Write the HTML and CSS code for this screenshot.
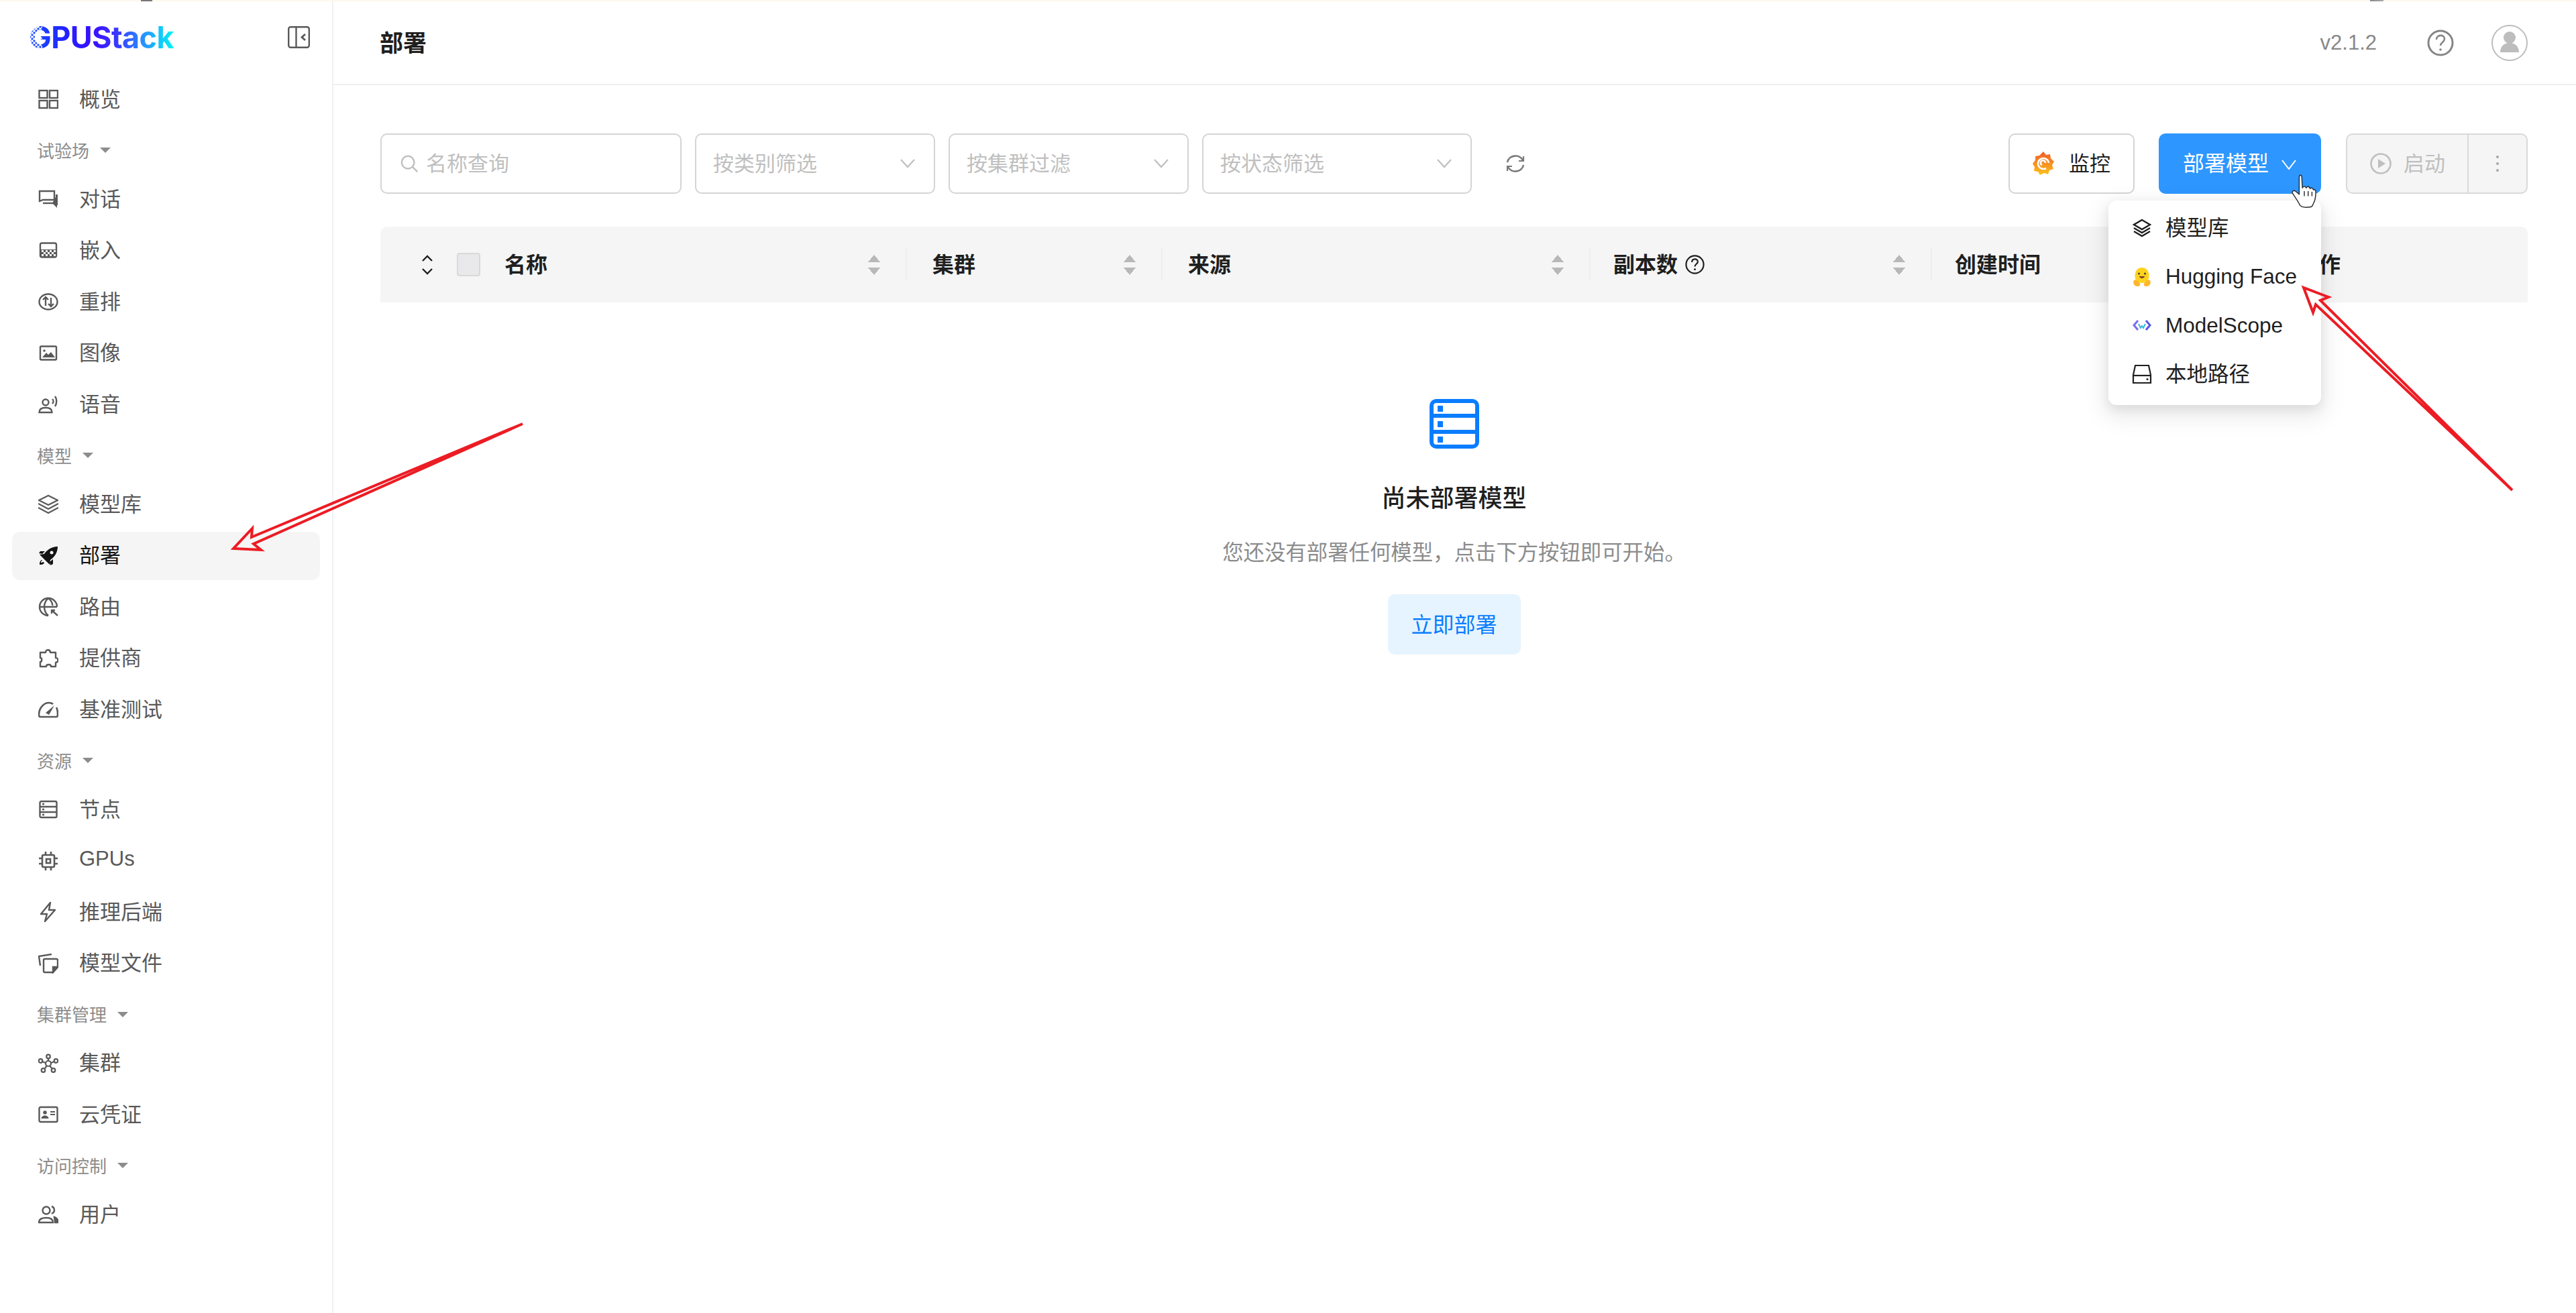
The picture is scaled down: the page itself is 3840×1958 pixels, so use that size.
FILE: index.html
```html
<!DOCTYPE html>
<html lang="zh-CN">
<head>
    <meta charset="UTF-8">
    <meta name="viewport" content="width=device-width, initial-scale=1.0">
    <title>GPUStack - 部署</title>
    <link rel="stylesheet" href="styles.css">
</head>
<body>
    <div class="top-strip"></div>
    <div class="shell">
        <aside class="sidebar">
            <div class="brand">
                <div class="logo">
                    <span class="logo-text">GPUStack</span>
                    <svg class="logo-dots" viewBox="0 0 20 40" fill="none" stroke="#fff" stroke-width="1.300">
                        <path d="M-6 6L10-10M-6 12L16-10M-6 18L22-4M-6 24L22-4M-6 30L20 4M-6 36L17 13M-6 42L13 23M0 42L14 28M6 42L20 28M12 42L22 32"/>
                        <path d="M-6 8L30 44M-6 2L30 38M-6-4L30 32M0-4L16 12M6-4L19 9M-6 14L24 44M-6 20L18 44M-6 26L12 44"/>
                    </svg>
                </div>
                <svg class="collapse-icon" viewBox="0 0 33 33" fill="none" stroke="#595959" stroke-width="2.400">
                    <rect x="1.2" y="1.2" width="30.6" height="30.6" rx="3"/>
                    <path d="M12.5 1v31"/>
                    <path d="M26 12l-5 4.500 5 4.500" stroke-width="2.800"/>
                </svg>
            </div>
            <nav class="menu">
                <a class="menu-item">
                    <svg class="icon" viewBox="0 0 30 30" fill="none" stroke="currentColor" stroke-width="2.400"><rect x="1.500" y="2" width="12" height="11"/><rect x="17" y="2" width="12" height="11"/><rect x="1.500" y="17" width="12" height="11"/><rect x="17" y="17" width="12" height="11"/></svg>
                    <span>概览</span>
                </a>
                <div class="menu-group"><span>试验场</span><i class="caret"></i></div>
                <a class="menu-item">
                    <svg class="icon" viewBox="0 0 30 30" fill="none" stroke="currentColor" stroke-width="2.400"><path d="M2 3h22v13H7l-5 2z"/><path d="M7 21h21"/><path d="M28 8v20l-7-7z" fill="currentColor" stroke="none"/><path d="M26 8h3v16h-3z" fill="currentColor" stroke="none"/></svg>
                    <span>对话</span>
                </a>
                <a class="menu-item">
                    <svg class="icon" viewBox="0 0 30 30"><rect x="3" y="3.500" width="24" height="21" rx="2.500" fill="none" stroke="currentColor" stroke-width="2.400"/><path d="M3 13h24v12H3z" fill="currentColor"/><path d="M5 14h3v3H5zM11 14h3v3h-3zM17 14h3v3h-3zM23 14h3v3h-3zM8 17h3v3H8zM14 17h3v3h-3zM20 17h3v3h-3zM5 20h3v3H5zM11 20h3v3h-3zM17 20h3v3h-3zM23 20h3v3h-3z" fill="#fff"/></svg>
                    <span>嵌入</span>
                </a>
                <a class="menu-item">
                    <svg class="icon" viewBox="0 0 30 30" fill="none" stroke="currentColor" stroke-width="2.400"><ellipse cx="15" cy="15" rx="13.500" ry="11.500"/><path d="M11 21V9M7 12l4-4 4 4"/><path d="M19 9v12M15 18l4 4 4-4"/></svg>
                    <span>重排</span>
                </a>
                <a class="menu-item">
                    <svg class="icon" viewBox="0 0 30 30"><rect x="3" y="4.500" width="24" height="20" rx="1.500" fill="none" stroke="currentColor" stroke-width="2.400"/><circle cx="9" cy="11" r="1.800" fill="currentColor"/><path d="M6 21l6-7 3 3 4-4 6 8z" fill="currentColor"/></svg>
                    <span>图像</span>
                </a>
                <a class="menu-item">
                    <svg class="icon" viewBox="0 0 30 30" fill="none" stroke="currentColor" stroke-width="2.400"><circle cx="11" cy="12" r="4.500"/><path d="M1.500 27c0-5 4-7 9.500-7s9.500 2 9.500 7z"/><path d="M21 7c2 2 2 5 0 7M25 3c3 4 3 11 0 15"/></svg>
                    <span>语音</span>
                </a>
                <div class="menu-group"><span>模型</span><i class="caret"></i></div>
                <a class="menu-item">
                    <svg class="icon" viewBox="0 0 30 30" fill="none" stroke="currentColor" stroke-width="2.200"><path d="M15 2l14 7-14 7L1 9z"/><path d="M0 14l15 8 15-8M0 20l15 8 15-8"/></svg>
                    <span>模型库</span>
                </a>
                <a class="menu-item active">
                    <svg class="icon" viewBox="0 0 30 30" fill="currentColor"><path d="M29 1C20 1 13 6 9 12l-7 1 4 4 7 7 4 4 1-7c6-4 11-11 11-20z"/><path d="M5 21c-3 2-3 5-3 7 3 0 6 0 7-3l-2-1c-1 1-2 1-3 1 0-1 0-2 2-3z"/><circle cx="20" cy="10" r="2.500" fill="#f5f5f5"/><path d="M3 8h7l-4 4-5-1zM22 20v7l-4 2-1-5z"/></svg>
                    <span>部署</span>
                </a>
                <a class="menu-item">
                    <svg class="icon" viewBox="0 0 30 30" fill="none" stroke="currentColor" stroke-width="2.400"><path d="M28 15A13 13 0 1 0 15 28"/><path d="M2 15h26M15 2c-8 7-8 19 0 26M15 2c4 3 6 7 6.500 11"/><path d="M29 28l-9-8M20 25v-5h5" /></svg>
                    <span>路由</span>
                </a>
                <a class="menu-item">
                    <svg class="icon" viewBox="0 0 30 30" fill="none" stroke="currentColor" stroke-width="2.400" stroke-linejoin="round"><path d="M11 6c0-5 7-5 7 0h8v8c5 0 4 7 0 7v6h-7c0-4-7-4-7 0H3v-7c3 0 3-6 0-6V6z"/></svg>
                    <span>提供商</span>
                </a>
                <a class="menu-item">
                    <svg class="icon" viewBox="0 0 30 30" fill="none" stroke="currentColor" stroke-width="2.600"><path d="M3 26c-1 0-2-1-2-3C1 12 9 5 16 5c3 0 5 1 6 2"/><path d="M27 12c2 3 2 7 2 11 0 2-1 3-2 3H3"/><path d="M11 20l13-11-8 14z" fill="currentColor" stroke="none"/></svg>
                    <span>基准测试</span>
                </a>
                <div class="menu-group"><span>资源</span><i class="caret"></i></div>
                <a class="menu-item">
                    <svg class="icon" viewBox="0 0 30 30" fill="none" stroke="currentColor" stroke-width="2.400"><rect x="2.500" y="3" width="25" height="24" rx="2"/><path d="M3 11h24M3 19h24"/><path d="M6 7h3M6 15h3M6 23h3"/></svg>
                    <span>节点</span>
                </a>
                <a class="menu-item">
                    <svg class="icon" viewBox="0 0 30 30" fill="none" stroke="currentColor" stroke-width="2.600"><rect x="6" y="6" width="18" height="18" rx="2"/><rect x="12" y="12" width="6" height="6"/><path d="M11 1v5M19 1v5M11 24v5M19 24v5M1 11h5M1 19h5M24 11h5M24 19h5"/></svg>
                    <span>GPUs</span>
                </a>
                <a class="menu-item">
                    <svg class="icon" viewBox="0 0 30 30" fill="none" stroke="currentColor" stroke-width="2.400" stroke-linejoin="round"><path d="M18 1L4 18h9l-3 11 15-17h-9z"/></svg>
                    <span>推理后端</span>
                </a>
                <a class="menu-item">
                    <svg class="icon" viewBox="0 0 30 30" fill="none" stroke="currentColor" stroke-width="2.400"><path d="M20 1L1 4l2 14"/><path d="M8 10c0-2 1-2 2-2h17c1 0 2 1 2 2v10l-7 8H10c-1 0-2-1-2-2z"/><path d="M22 28v-8h7z" fill="currentColor"/></svg>
                    <span>模型文件</span>
                </a>
                <div class="menu-group"><span>集群管理</span><i class="caret"></i></div>
                <a class="menu-item">
                    <svg class="icon" viewBox="0 0 30 30" fill="none" stroke="currentColor" stroke-width="2.200"><circle cx="15" cy="15" r="4"/><circle cx="15" cy="4.500" r="2.800"/><circle cx="3.500" cy="11" r="2.800"/><circle cx="26.500" cy="11" r="2.800"/><circle cx="7.500" cy="25" r="2.800"/><circle cx="22.500" cy="25" r="2.800"/><path d="M15 7v4M6 12l5 2M24 12l-5 2M10 22l3-4M20 22l-3-4"/></svg>
                    <span>集群</span>
                </a>
                <a class="menu-item">
                    <svg class="icon" viewBox="0 0 30 30"><rect x="1.500" y="4" width="27" height="22" rx="2" fill="none" stroke="currentColor" stroke-width="2.400"/><circle cx="10" cy="12" r="2.800" fill="currentColor"/><path d="M4.500 21c0-3 3-4.500 5.500-4.500s5.500 1.500 5.500 4.500z" fill="currentColor"/><path d="M18 11h7M18 15h7" stroke="currentColor" stroke-width="2"/></svg>
                    <span>云凭证</span>
                </a>
                <div class="menu-group"><span>访问控制</span><i class="caret"></i></div>
                <a class="menu-item">
                    <svg class="icon" viewBox="0 0 30 30" fill="none" stroke="currentColor" stroke-width="2.400"><circle cx="12" cy="9" r="5.500"/><path d="M1 27c0-5 5-7 11-7s10 2 10 7z"/><path d="M20 3c3 1 4 3 4 6s-2 4-4 5"/><path d="M24 19c3 1 6 4 6 8h-5z" fill="currentColor"/></svg>
                    <span>用户</span>
                </a>
            </nav>
        </aside>

        <main class="main">
            <header class="page-header">
                <h1 class="page-title">部署</h1>
                <div class="header-right">
                    <span class="version">v2.1.2</span>
                    <svg class="help-icon" viewBox="0 0 40 40" fill="none" stroke="#858585" stroke-width="3"><circle cx="20" cy="20" r="18"/><path d="M14 15c0-8 12-8 12-1 0 5-6 5-6 10" stroke-width="2.600"/><circle cx="20" cy="30" r="1.800" fill="#858585" stroke="none"/></svg>
                    <svg class="avatar" viewBox="0 0 54 54" fill="#bdbdbd"><circle cx="27" cy="27" r="26" fill="none" stroke="#bdbdbd" stroke-width="2"/><circle cx="27" cy="19" r="9"/><path d="M13 41c0-19 28-19 28 0z"/></svg>
                </div>
            </header>

            <section class="content">
                <div class="toolbar">
                    <div class="filters">
                        <div class="field field-search">
                            <svg class="search-icon" viewBox="0 0 30 30" fill="none" stroke="#bfbfbf" stroke-width="2.600"><circle cx="13" cy="13" r="10"/><path d="M20 20l8 8"/></svg>
                            <span>名称查询</span>
                        </div>
                        <div class="field field-select"><span>按类别筛选</span><svg class="chev" viewBox="0 0 22 14" fill="none" stroke="#bfbfbf" stroke-width="2.200"><path d="M1 1l10 11L21 1"/></svg></div>
                        <div class="field field-select"><span>按集群过滤</span><svg class="chev" viewBox="0 0 22 14" fill="none" stroke="#bfbfbf" stroke-width="2.200"><path d="M1 1l10 11L21 1"/></svg></div>
                        <div class="field field-select wide"><span>按状态筛选</span><svg class="chev" viewBox="0 0 22 14" fill="none" stroke="#bfbfbf" stroke-width="2.200"><path d="M1 1l10 11L21 1"/></svg></div>
                        <svg class="refresh" viewBox="0 0 30 30" fill="none" stroke="#7a7a7a" stroke-width="2.600"><path d="M3 13C5 2 21 0 26 10"/><path d="M27 17C25 28 9 30 4 20"/><path d="M27 4v7h-7M3 26v-7h7" stroke-width="2.200"/></svg>
                    </div>
                    <div class="actions">
                        <button class="btn btn-default">
                            <svg class="btn-icon" viewBox="0 0 32 36">
                                <defs><linearGradient id="graf" x1="0" y1="1" x2="0" y2="0"><stop offset="0" stop-color="#fcc21b"/><stop offset="1" stop-color="#f15b2a"/></linearGradient></defs>
                                <path d="M16 0l4 5 6-1 1 6 5 5-3 5 2 6-6 2-2 6-6-2-6 3-3-5-6-1 1-6-3-5 4-5 0-6 6-1z" fill="url(#graf)"/>
                                <path d="M24 17a8 8 0 1 0-4 8M14 20a3.500 3.500 0 1 1 5-3" fill="none" stroke="#fff" stroke-width="2.600"/>
                            </svg>
                            <span>监控</span>
                        </button>
                        <div class="deploy-wrap">
                            <button class="btn btn-primary">
                                <span>部署模型</span>
                                <svg class="btn-chev" viewBox="0 0 22 15" fill="none" stroke="#fff" stroke-width="2"><path d="M1 1l10 13L21 1"/></svg>
                            </button>
                            <div class="dropdown">
                                <div class="dropdown-item cjk">
                                    <svg class="drop-icon" viewBox="0 0 30 30" fill="none" stroke="#1f1f1f" stroke-width="2.400"><path d="M15 3l12 7-12 7-12-7z"/><path d="M3 15l12 7 12-7M3 20l12 7 12-7"/></svg>
                                    <span>模型库</span>
                                </div>
                                <div class="dropdown-item">
                                    <svg class="drop-icon" viewBox="0 0 30 30">
                                        <path d="M15 1c7 0 10.500 6 10.500 12 0 6-3 11-10.500 11S4.500 19 4.500 13C4.500 7 8 1 15 1z" fill="#ffd21e"/>
                                        <circle cx="10.500" cy="10" r="1.500" fill="#3a3b45"/><circle cx="19.500" cy="10" r="1.500" fill="#3a3b45"/>
                                        <path d="M10.500 14c2.500 4 6.500 4 9 0z" fill="#7a3b2e"/>
                                        <path d="M3 26c-2-3 0-7 2-7 2 0 6 4 7 6 1 3-1 4-4 4-2 0-4-1-5-3zM27 26c2-3 0-7-2-7-2 0-6 4-7 6-1 3 1 4 4 4 2 0 4-1 5-3z" fill="#ffb52e"/>
                                    </svg>
                                    <span>Hugging Face</span>
                                </div>
                                <div class="dropdown-item">
                                    <svg class="drop-icon" viewBox="0 0 30 30" fill="none" stroke-width="3">
                                        <path d="M9 8L3 15l6 7" stroke="#7a6cf0"/><path d="M21 8l6 7-6 7" stroke="#5a56e2"/>
                                        <path d="M10 13l3 6 2-3 2 3 3-6" stroke="#37b6e0" stroke-width="2"/>
                                    </svg>
                                    <span>ModelScope</span>
                                </div>
                                <div class="dropdown-item cjk">
                                    <svg class="drop-icon" viewBox="0 0 30 30" fill="none" stroke="#1f1f1f" stroke-width="2.200"><path d="M2 28V16L5 2h20l3 14v12z"/><path d="M2 17h26"/><circle cx="23" cy="22.500" r="1.500" fill="#1f1f1f" stroke="none"/></svg>
                                    <span>本地路径</span>
                                </div>
                            </div>
                            <svg class="hand" viewBox="0 0 40 52" fill="#fff" stroke="#2a2a2a" stroke-width="1.500" stroke-linejoin="round">
                                <path d="M12 4c0-4 4-4 4 0l1 17c1-3 5-3 6 0 1-3 5-3 6 1 2-2 5-1 5 2 2-1 4 0 4 3 0 8-1 14-4 19-1 3-3 5-5 5-7 1-13 1-16-3C10 41 5 35 2 30c-2-3 1-6 4-4l6 5z"/>
                                <path d="M20 26v8M26 26v8M32 27v7" fill="none"/>
                            </svg>
                        </div>
                        <div class="btn-group">
                            <button class="btn btn-disabled">
                                <svg class="btn-icon play" viewBox="0 0 32 32"><circle cx="16" cy="16" r="14.500" fill="none" stroke="#bfbfbf" stroke-width="2.600"/><path d="M12 9l11 7-11 7z" fill="#bfbfbf"/></svg>
                                <span>启动</span>
                            </button>
                            <button class="btn btn-more"><i></i><i></i><i></i></button>
                        </div>
                    </div>
                </div>

                <div class="table-head">
                    <div class="cell cell-name">
                        <svg class="expand" viewBox="0 0 18 30" fill="none" stroke="#1f1f1f" stroke-width="2.400"><path d="M2 9l7-7 7 7M2 21l7 7 7-7"/></svg>
                        <span class="checkbox"></span>
                        <span class="cell-label">名称</span>
                        <i class="sorter"></i>
                    </div>
                    <div class="cell cell-cluster"><span class="cell-label">集群</span><i class="sorter"></i></div>
                    <div class="cell cell-source"><span class="cell-label">来源</span><i class="sorter"></i></div>
                    <div class="cell cell-replica">
                        <span class="cell-label">副本数</span>
                        <svg class="th-help" viewBox="0 0 40 40" fill="none" stroke="#1f1f1f" stroke-width="3"><circle cx="20" cy="20" r="18"/><path d="M14 15c0-8 12-8 12-1 0 5-6 5-6 10" stroke-width="3"/><circle cx="20" cy="30" r="2" fill="#1f1f1f" stroke="none"/></svg>
                        <i class="sorter"></i>
                    </div>
                    <div class="cell cell-time"><span class="cell-label">创建时间</span></div>
                    <div class="cell cell-ops"><span class="cell-label">操作</span></div>
                </div>

                <div class="empty">
                    <svg class="empty-icon" viewBox="0 0 74 74">
                        <rect x="3" y="3" width="68" height="68" rx="7" fill="none" stroke="#0a7dff" stroke-width="6"/>
                        <path d="M3 25h68M3 49h68" stroke="#0a7dff" stroke-width="6"/>
                        <path d="M12 10h8v9h-8zM12 33h8v9h-8zM12 56h8v9h-8z" fill="#0a7dff"/>
                    </svg>
                    <h2 class="empty-title">尚未部署模型</h2>
                    <p class="empty-desc">您还没有部署任何模型，点击下方按钮即可开始。</p>
                    <button class="btn-soft">立即部署</button>
                </div>
            </section>
        </main>
    </div>

    <!-- red annotation arrows drawn over the screenshot -->
    <svg class="arrows" viewBox="0 0 3840 1958" fill="none" stroke="#ec1c24" stroke-width="4">
        <path d="M779 632L375 801 376 788 348 818 389 820 378 811z"/>
        <path d="M3745 731L3452 454 3448 466 3434 429 3471 443 3459 448z"/>
    </svg>
</body>
</html>
```

FILE: styles.css
```css
* {
    box-sizing: border-box;
}
body {
    margin: 0;
    height: 1958px;
    overflow: hidden;
    background-color: #fff;
    color: #1f1f1f;
    font-family: "Liberation Sans", "Noto Sans CJK SC", sans-serif;
    font-size: 31px;
    position: relative;
}
button {
    font-family: inherit;
}
.top-strip {
    height: 2px;
    background:
        linear-gradient(90deg, transparent 210px, #777 210px, #777 227px, transparent 227px),
        linear-gradient(90deg, transparent 3533px, #888 3533px, #aaa 3553px, transparent 3553px),
        #fdf7ee;
}
.shell {
    display: flex;
    height: 1956px;
}

/* Sidebar */
.sidebar {
    width: 497px;
    flex-shrink: 0;
    padding: 0 18px;
    border-right: 2px solid #f0f0f0;
}
.brand {
    height: 110px;
    display: flex;
    align-items: center;
    justify-content: space-between;
    padding: 0 15px 3px 27px;
}
.logo {
    position: relative;
    margin-left: -2px;
}
.logo-text {
    display: block;
    font-family: Inter, "Liberation Sans", sans-serif;
    font-weight: 700;
    font-size: 45px;
    letter-spacing: -0.6px;
    line-height: 48px;
    background: linear-gradient(90deg, #1a52ff 0%, #2222ff 25%, #3a0fff 45%, #3a3cff 62%, #2a8cff 78%, #00f4f4 100%);
    -webkit-background-clip: text;
    background-clip: text;
    color: transparent;
}
.logo-dots {
    position: absolute;
    left: 0;
    top: 4px;
    width: 20px;
    height: 40px;
}
.collapse-icon {
    width: 33px;
    height: 33px;
}
.menu {
    display: flex;
    flex-direction: column;
    gap: 4px;
}
.menu-item {
    height: 72.5px;
    display: flex;
    align-items: center;
    gap: 31px;
    padding-left: 39px;
    border-radius: 12px;
    color: #595959;
}
.menu-item span {
    margin-top: -6px;
}
.menu-item.active {
    background-color: #f5f5f5;
    color: #141414;
}
.icon {
    width: 30px;
    height: 30px;
    flex-shrink: 0;
}
.menu-group {
    height: 68.5px;
    padding: 1px 0 0 37px;
    display: flex;
    align-items: center;
    font-size: 26px;
    color: #8c8c8c;
}
.caret {
    margin: 2px 0 0 16px;
    border-left: 8px solid transparent;
    border-right: 8px solid transparent;
    border-top: 8px solid #8c8c8c;
}

/* Header */
.main {
    flex: 1;
    min-width: 0;
}
.page-header {
    height: 125px;
    display: flex;
    align-items: center;
    justify-content: space-between;
    padding: 0 72px 0 69px;
    border-bottom: 2px solid #f0f0f0;
}
.page-title {
    margin: -4px 0 0;
    font-size: 35px;
    font-weight: 700;
}
.header-right {
    display: flex;
    align-items: center;
}
.version {
    color: #888;
    font-size: 31px;
}
.help-icon {
    width: 40px;
    height: 40px;
    margin-left: 75px;
}
.avatar {
    width: 54px;
    height: 54px;
    margin-left: 56px;
}

/* Toolbar */
.content {
    padding: 72px 72px 0 70px;
}
.toolbar {
    display: flex;
    justify-content: space-between;
}
.filters, .actions {
    display: flex;
    align-items: center;
}
.filters {
    gap: 20px;
}
.field {
    height: 90px;
    display: flex;
    align-items: center;
    border: 2px solid #d4d4d8;
    border-radius: 10px;
    color: #bfbfbf;
}
.field span, .btn span {
    margin-top: -6px;
}
.field-search {
    width: 449px;
    padding-left: 27px;
    gap: 11px;
}
.search-icon {
    width: 28px;
    height: 28px;
}
.field-select {
    width: 358px;
    padding: 0 28px 0 25px;
    justify-content: space-between;
}
.field-select.wide {
    width: 402px;
}
.chev {
    width: 22px;
    height: 14px;
}
.refresh {
    width: 30px;
    height: 30px;
    margin-left: 30px;
}
.actions {
    gap: 36px;
}
.btn {
    height: 90px;
    display: flex;
    align-items: center;
    border-radius: 10px;
    font-size: 31px;
    background: none;
    padding: 0;
}
.btn-default {
    width: 188px;
    padding-left: 34px;
    gap: 22px;
    border: 2px solid #d4d4d8;
    background-color: #fff;
    color: #1f1f1f;
}
.btn-icon {
    width: 32px;
    height: 36px;
}
.btn-primary {
    width: 242px;
    padding-left: 36px;
    gap: 19px;
    border: none;
    background-color: #2e96ff;
    color: #fff;
    font-size: 32px;
}
.btn-chev {
    width: 22px;
    height: 15px;
    margin-top: 3px;
}
.deploy-wrap {
    position: relative;
}
.dropdown {
    position: absolute;
    top: 100px;
    right: 0;
    width: 317px;
    height: 305px;
    padding: 5px 0;
    background-color: #fff;
    border-radius: 12px;
    box-shadow: 0 12px 32px 8px rgba(0, 0, 0, 0.08), 0 6px 16px rgba(0, 0, 0, 0.08);
    z-index: 5;
}
.dropdown-item {
    height: 72.5px;
    display: flex;
    align-items: center;
    gap: 20px;
    padding-left: 35px;
    color: #1f1f1f;
    font-size: 31.5px;
}
.dropdown-item.cjk span {
    margin-top: -6px;
}
.drop-icon {
    width: 30px;
    height: 30px;
}
.hand {
    position: absolute;
    left: 198px;
    top: 61px;
    width: 38px;
    height: 50px;
    z-index: 6;
}
.btn-group {
    display: flex;
    width: 271px;
    margin-left: 1px;
    border: 2px solid #d9d9d9;
    border-radius: 10px;
    background-color: #f5f5f5;
}
.btn-disabled {
    height: 86px;
    width: 181px;
    border: none;
    border-right: 2px solid #d9d9d9;
    border-radius: 0;
    padding-left: 34px;
    gap: 18px;
    color: #bfbfbf;
}
.btn-disabled .play {
    height: 32px;
}
.btn-more {
    height: 86px;
    flex: 1;
    border: none;
    flex-direction: column;
    justify-content: center;
    gap: 6px;
}
.btn-more i {
    width: 4px;
    height: 4px;
    border-radius: 50%;
    background-color: #a6a6a6;
}

/* Table head */
.table-head {
    margin-top: 49px;
    height: 113px;
    display: flex;
    align-items: center;
    background-color: #f5f5f5;
    border-radius: 10px 10px 0 0;
}
.cell {
    height: 49px;
    display: flex;
    align-items: center;
    padding: 0 38px 0 38px;
    border-right: 2px solid #eeeeee;
    flex-shrink: 0;
}
.cell-label {
    margin-top: -5px;
    font-weight: 700;
    font-size: 32px;
    color: #1f1f1f;
}
.cell-name {
    width: 785px;
    padding-left: 61px;
}
.cell-cluster {
    width: 381px;
}
.cell-source {
    width: 638px;
}
.cell-replica {
    width: 509px;
    padding-left: 34px;
}
.cell-time {
    width: 545px;
    padding-left: 34px;
    border-right: none;
}
.cell-ops {
    padding-left: 0;
    border-right: none;
}
.expand {
    width: 18px;
    height: 30px;
}
.checkbox {
    width: 35px;
    height: 35px;
    margin: 0 36px 0 35px;
    background-color: #e9e9eb;
    border: 2px solid #d9d9d9;
    border-radius: 4px;
}
.sorter {
    margin-left: auto;
    width: 18px;
    height: 30px;
    background:
        linear-gradient(to bottom right, transparent 49%, #b8b8b8 50%) left top / 9px 11px no-repeat,
        linear-gradient(to bottom left, transparent 49%, #b8b8b8 50%) right top / 9px 11px no-repeat,
        linear-gradient(to top right, transparent 49%, #b8b8b8 50%) left bottom / 9px 11px no-repeat,
        linear-gradient(to top left, transparent 49%, #b8b8b8 50%) right bottom / 9px 11px no-repeat;
}
.th-help {
    width: 29px;
    height: 29px;
    margin-left: 11px;
}

/* Empty state */
.empty {
    display: flex;
    flex-direction: column;
    align-items: center;
    padding-top: 144px;
}
.empty-icon {
    width: 74px;
    height: 74px;
}
.empty-title {
    margin: 50px 0 0;
    font-size: 36px;
    line-height: 50px;
    font-weight: 500;
    color: #1f1f1f;
}
.empty-desc {
    margin: 34px 0 0;
    font-size: 31.4px;
    line-height: 44px;
    color: #8c8c8c;
}
.btn-soft {
    margin-top: 39px;
    width: 198px;
    height: 90px;
    border: none;
    border-radius: 10px;
    padding: 0 0 5px;
    background-color: #e6f4ff;
    color: #0a7dff;
    font-size: 32px;
}

.arrows {
    position: absolute;
    left: 0;
    top: 0;
    width: 3840px;
    height: 1958px;
    pointer-events: none;
    z-index: 10;
}
```
